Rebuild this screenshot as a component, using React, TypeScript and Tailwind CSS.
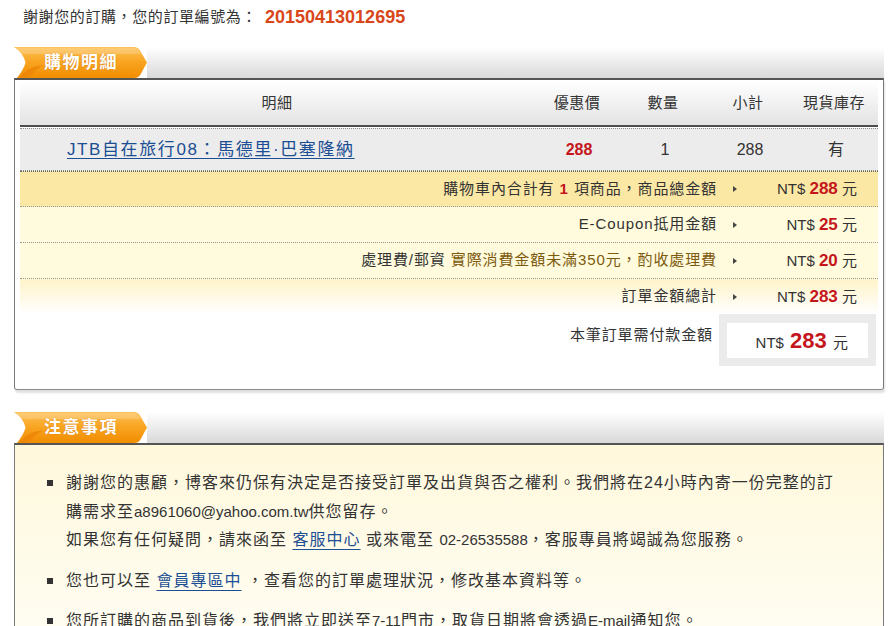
import React from "react";

function Tab({ label }: { label: string }) {
  return (
    <div className="flex h-[31px] items-stretch">
      <div className="relative w-[133px] shrink-0">
        <svg className="absolute inset-0" width="133" height="31" viewBox="0 0 133 31">
          <defs>
            <linearGradient id="tabg" x1="0" y1="0" x2="0" y2="1">
              <stop offset="0" stopColor="#fdc25a" />
              <stop offset="0.45" stopColor="#f9a623" />
              <stop offset="1" stopColor="#f18d00" />
            </linearGradient>
            <linearGradient id="tabs" x1="0" y1="0" x2="1" y2="1">
              <stop offset="0" stopColor="#e56f00" />
              <stop offset="1" stopColor="#f59a10" />
            </linearGradient>
          </defs>
          <path
            d="M0 0 H120 Q124 0 126 3.5 L133 15.5 L126.5 27.5 Q124.5 31 120 31 H3 Q10 22 11.5 15.5 Q10 7 0 0 Z"
            fill="url(#tabg)"
          />
          <path d="M6 31 Q12 20 30 18 Q20 23 17 31 Z" fill="url(#tabs)" opacity="0.75" />
          <path d="M2 1 H120 Q123 1 125 4 L127 7 H6 Q4 4 2 1 Z" fill="#ffffff" opacity="0.18" />
        </svg>
        <span className="relative flex h-full items-center pl-[30px] text-[17px] font-bold tracking-[1.5px] text-white [text-shadow:0_0_1px_rgba(180,80,0,0.6)]">
          {label}
        </span>
      </div>
      <div className="flex-1 bg-gradient-to-b from-white to-[#d9d9d9]" />
    </div>
  );
}

function Arrow() {
  return (
    <svg width="4" height="6" viewBox="0 0 4 6">
      <path d="M0 0 L4 3 L0 6 Z" fill="#444" />
    </svg>
  );
}

function Amount({ n }: { n: string }) {
  return (
    <span className="whitespace-nowrap tracking-normal">
      NT$ <span className="text-[17px] font-bold text-[#c4161c]">{n}</span> 元
    </span>
  );
}

function SumRow({
  children,
  amount,
  className,
}: {
  children: React.ReactNode;
  amount: string;
  className: string;
}) {
  return (
    <div className={"flex items-center text-[15px] " + className}>
      <div className="flex-1 text-right tracking-[0.9px]">{children}</div>
      <div className="flex w-[36px] justify-center">
        <Arrow />
      </div>
      <div className="w-[125px] pr-[21px] text-right">
        <Amount n={amount} />
      </div>
    </div>
  );
}

export default function App() {
  return (
    <div className="w-[894px] bg-white pb-[40px] font-['Liberation_Sans','Noto_Sans_CJK_TC',sans-serif] text-[#333]">
      <div className="flex h-[35px] items-center pl-[23px] text-[15px] tracking-[0.6px]">
        謝謝您的訂購，您的訂單編號為：
        <span className="ml-[8px] text-[18px] font-bold tracking-normal text-[#d9461a]">20150413012695</span>
      </div>

      <div className="ml-[14px] mt-[12px] w-[870px]">
        <Tab label="購物明細" />
        <div className="rounded-b-[3px] border-x border-b border-t-2 border-x-[#7a7a7a] border-b-[#8a8a8a] border-t-[#555] px-[5px] pb-[23px] pt-[1px] shadow-[1px_3px_2px_rgba(0,0,0,0.12)]">
          <div className="flex h-[46px] items-center border-b-2 border-b-[#4d4d4d] bg-gradient-to-b from-white to-[#e3e3e3] text-[15px] tracking-[0.5px]">
            <div className="w-[514px] text-center">明細</div>
            <div className="w-[86px] text-center">優惠價</div>
            <div className="w-[86px] text-center">數量</div>
            <div className="w-[84px] text-center">小計</div>
            <div className="w-[88px] text-center">現貨庫存</div>
          </div>
          <div className="mt-[1px] flex h-[43px] items-center border-y border-dotted border-y-[#8a8a8a] bg-[#ececec] text-[16px]">
            <div className="w-[514px] pl-[47px]">
              <a className="text-[17px] tracking-[1.6px] text-[#1b4e93] underline decoration-[#1b4e93] underline-offset-[3px]">
                JTB自在旅行08：馬德里·巴塞隆納
              </a>
            </div>
            <div className="w-[86px] pl-[4px] text-center text-[16px] font-bold text-[#c4161c]">288</div>
            <div className="w-[86px] pl-[4px] text-center">1</div>
            <div className="w-[84px] pl-[4px] text-center">288</div>
            <div className="w-[88px] pl-[4px] text-center">有</div>
          </div>

          <SumRow amount="288" className="h-[36px] border-b border-t border-dotted border-b-[#999] border-t-[#666] bg-[#fce8a5]">
            購物車內合計有 <span className="font-bold text-[#c4161c]">1</span> 項商品，商品總金額
          </SumRow>
          <SumRow amount="25" className="h-[36px] border-b border-dotted border-b-[#999] bg-[#fffbdc]">
            E-Coupon抵用金額
          </SumRow>
          <SumRow amount="20" className="h-[36px] border-b border-dotted border-b-[#999] bg-[#fffbdc]">
            處理費/郵資 <span className="text-[#7d5a0e]">實際消費金額未滿350元，酌收處理費</span>
          </SumRow>
          <SumRow amount="283" className="h-[35px] bg-gradient-to-b from-[#fff3c8] to-white">
            訂單金額總計
          </SumRow>

          <div className="flex items-start">
            <div className="flex-1 pr-[6px] pt-[11px] text-right text-[15px] leading-[20px] tracking-[0.9px]">
              本筆訂單需付款金額
            </div>
            <div className="mr-[2px] w-[157px] bg-[#ebebeb] px-[8px] pb-[8px] pt-[9px]">
              <div className="flex h-[35px] items-center justify-end bg-white pr-[20px] text-[15px]">
                <span className="whitespace-nowrap">
                  NT$ <span className="mx-[2px] text-[22px] font-bold text-[#c4161c]">283</span> 元
                </span>
              </div>
            </div>
          </div>
        </div>

        <div className="mt-[22px]">
          <Tab label="注意事項" />
          <div className="border-x border-t-2 border-x-[#7a7a7a] border-t-[#555] bg-gradient-to-b from-[#fff8dc] to-[#fffef6] pb-[30px] pl-[32px] pr-[20px] pt-[24px] text-[16px] leading-[28.5px] tracking-[1px]">
            <ul className="flex flex-col gap-[12px]">
              <li className="flex items-start">
                <span className="mr-[13px] mt-[11px] h-[6px] w-[6px] shrink-0 bg-[#333]" />
                <div>
                  謝謝您的惠顧，博客來仍保有決定是否接受訂單及出貨與否之權利。我們將在24小時內寄一份完整的訂
                  <br />
                  購需求至<span className="text-[15px] tracking-normal">a8961060@yahoo.com.tw</span>供您留存。
                  <br />
                  如果您有任何疑問，請來函至{" "}
                  <a className="text-[#1b4e93] underline decoration-[#1b4e93] underline-offset-[4px]">客服中心</a>{" "}
                  或來電至 <span className="text-[15px] tracking-normal">02-26535588</span>，客服專員將竭誠為您服務。
                </div>
              </li>
              <li className="flex items-start">
                <span className="mr-[13px] mt-[11px] h-[6px] w-[6px] shrink-0 bg-[#333]" />
                <div>
                  您也可以至{" "}
                  <a className="text-[#1b4e93] underline decoration-[#1b4e93] underline-offset-[4px]">會員專區中</a>{" "}
                  ，查看您的訂單處理狀況，修改基本資料等。
                </div>
              </li>
              <li className="flex items-start">
                <span className="mr-[13px] mt-[11px] h-[6px] w-[6px] shrink-0 bg-[#333]" />
                <div>
                  您所訂購的商品到貨後，我們將立即送至<span className="text-[15px] tracking-normal">7-11</span>門市，取貨日期將會透過<span className="text-[15px] tracking-normal">E-mail</span>通知您。
                </div>
              </li>
            </ul>
          </div>
        </div>
      </div>
    </div>
  );
}
